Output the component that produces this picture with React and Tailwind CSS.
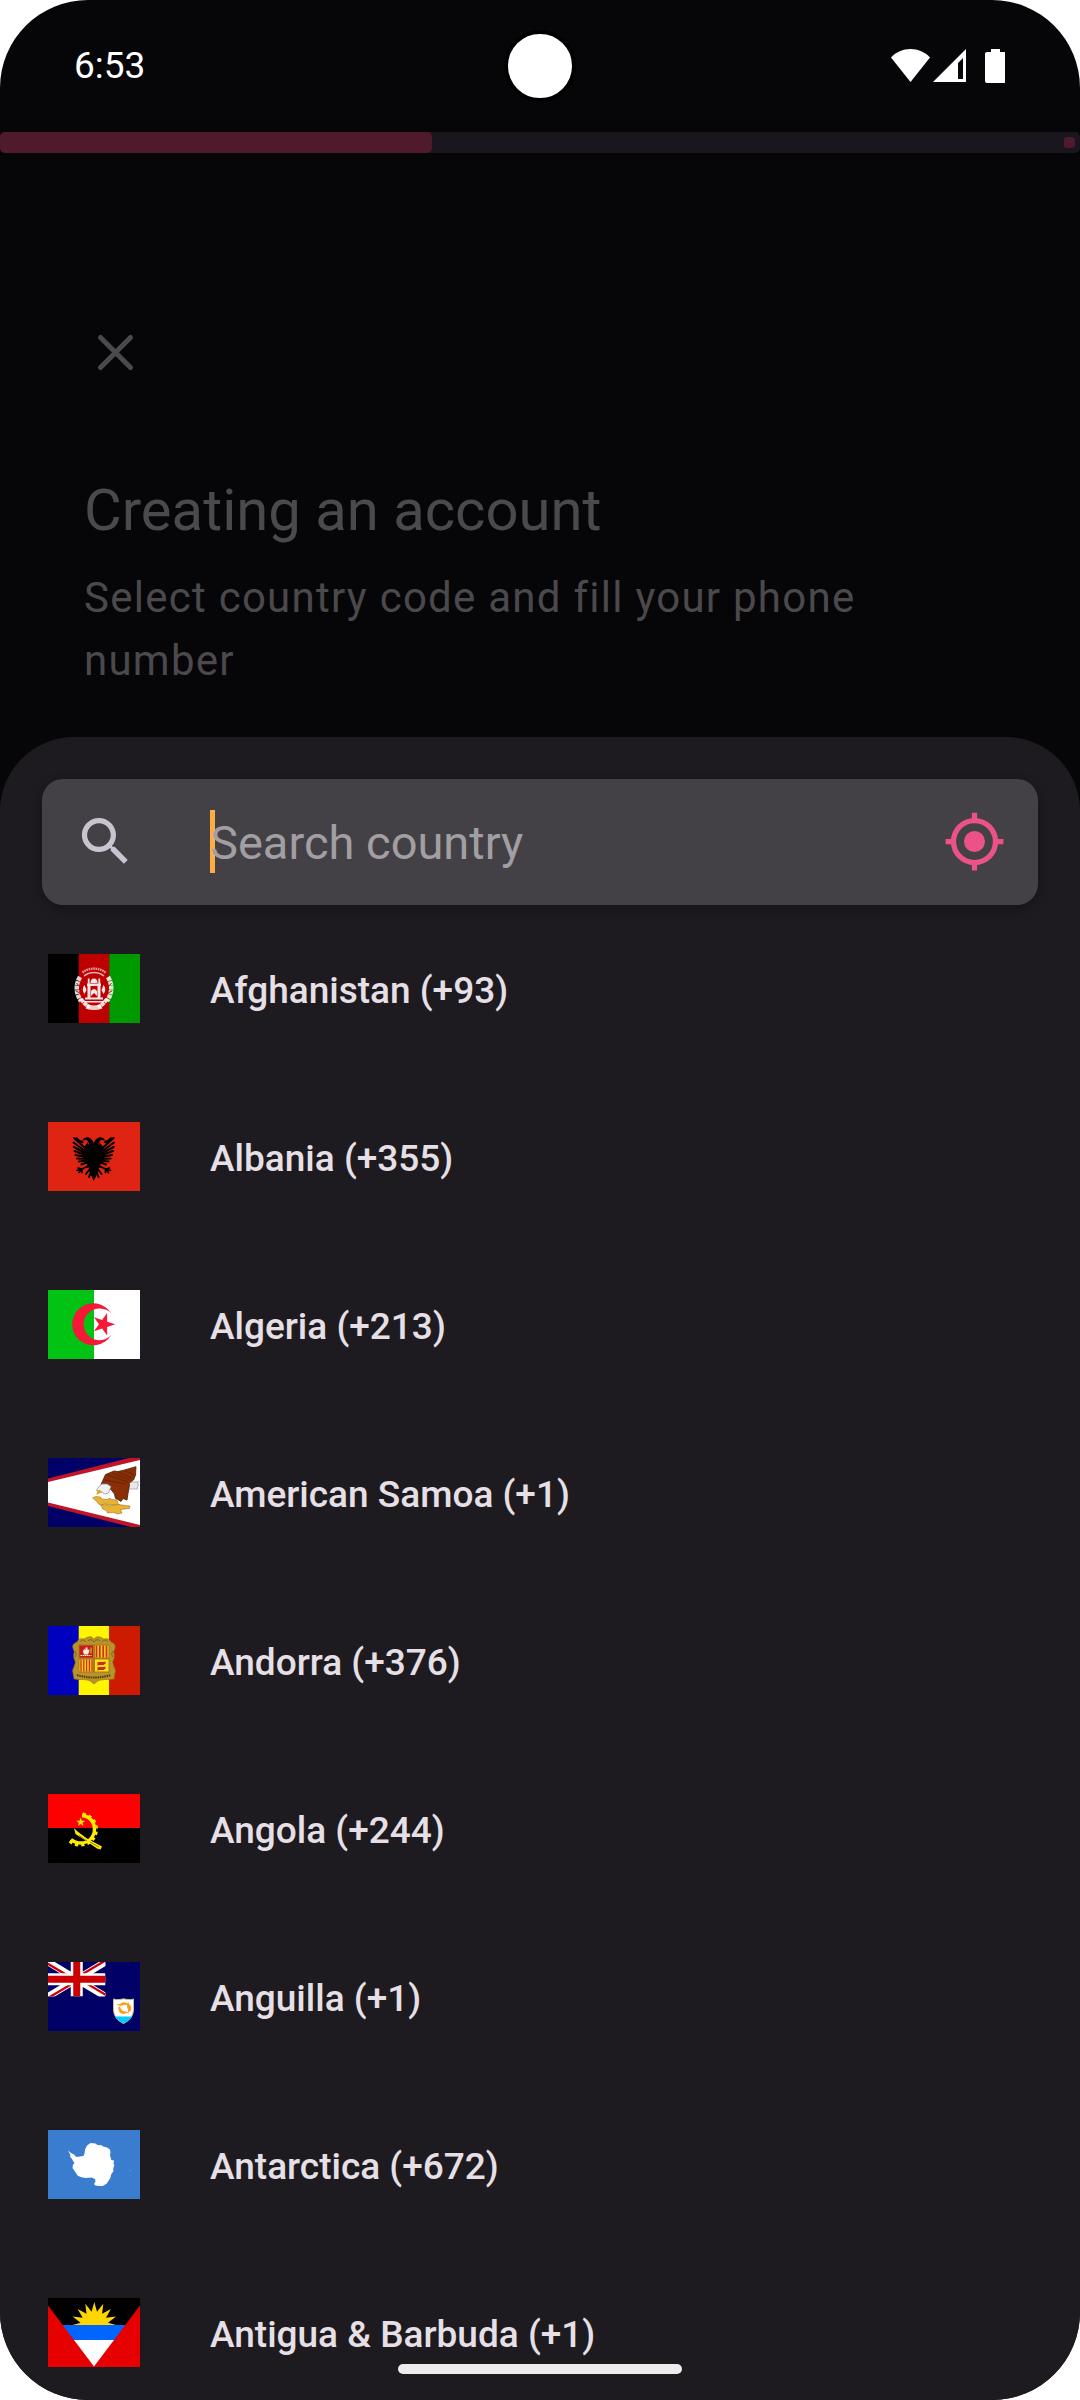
import React from "react";

function starPoints(cx, cy, outer, inner, count, startDeg) {
  const pts = [];
  for (let i = 0; i < count * 2; i++) {
    const r = i % 2 === 0 ? outer : inner;
    const a = ((startDeg + (i * 180) / count) * Math.PI) / 180;
    pts.push(`${(cx + r * Math.cos(a)).toFixed(2)},${(cy + r * Math.sin(a)).toFixed(2)}`);
  }
  return pts.join(" ");
}

function Afghanistan() {
  return (
    <>
      <rect width="31" height="69" fill="#000" />
      <rect x="30.7" width="30.6" height="69" fill="#bf0000" />
      <rect x="61.3" width="30.7" height="69" fill="#009900" />
      <g fill="none" stroke="#fff">
        <path d="M32 23q-7 12 1 24M60 23q7 12-1 24" strokeWidth="4.500" strokeDasharray="4 .6" opacity=".85" />
        <path d="M33 45q4 6 9 8M59 45q-4 6-9 8" strokeWidth="4" strokeDasharray="4 .5" opacity=".85" />
        <path d="M34.500 18.500a19 19 0 0 1 23 0" strokeWidth="2.500" strokeDasharray="1.600 .7" opacity=".6" />
        <path d="M36 22a16 16 0 0 1 20 0" strokeWidth="1.500" opacity=".7" />
        <path d="M38.500 52.500q7.500 2.500 15 0" strokeWidth="4.500" opacity=".8" />
        <path d="M28.500 29l3.500 4M28 37l4 2M63.500 29l-3.500 4M64 37l-4 2" stroke="#bf0000" strokeWidth=".9" />
      </g>
      <g fill="#fff" opacity=".9">
        <path d="M42.500 29a3.500 4.500 0 0 1 7 0z" />
        <path d="M39 29.500h14v2.500H39zM39.500 31h3v13h-3zM49.500 31h3v13h-3zM39.800 24.500h1.800v5.500h-1.800zM50.400 24.500h1.800v5.500h-1.800z" />
        <path d="M43 37q3-4 6 0v5l-3-3-3 3z" />
        <path d="M37 43.500h18v2H37zM36 47h20v1.500H36z" />
        <path d="M36.500 31q-3.500 4 0 9l2-4zM55.500 31q3.500 4 0 9l-2-4z" />
      </g>
    </>
  );
}

function AlbaniaHalf() {
  return (
    <>
      <path d="M46 22C44.500 17 41 14.800 38 15.500c-2 .3-3 1.500-3.500 3l4-.5c2 .5 1.500 3-.5 4.500l-2 3-1 8 2 6 2.500 3.500-1 3 2.500-.5-.5 4 2 .5.5 3.500L46 59z" fill="#000" />
      <g fill="none" stroke="#000" strokeLinecap="round">
        <path
          d="M37 26L26 16M37 29L25.500 20.500M37 31L25.800 25M37 33L26.500 29M38 35L27.500 33M38.500 37L29 36.500M39 38.500L31 39.500M40 40L33.500 42.500"
          strokeWidth="2"
        />
        <path d="M34.500 20q-4-.5-6-3.500" strokeWidth="2.500" />
        <path d="M40 44l-6 3-4-1M34 47l-5 1.500M34 47l-3 3.500M34 47v3.500" strokeWidth="1.700" />
        <path d="M41 48l-3 4M43 50l-2 5" strokeWidth="2" />
      </g>
      <path d="M35 19.500q6-1.500 5.500 3" fill="none" stroke="#e02413" strokeWidth=".8" />
    </>
  );
}

function Albania() {
  return (
    <>
      <rect width="92" height="69" fill="#e02413" />
      <AlbaniaHalf />
      <g transform="matrix(-1 0 0 1 91.500 0)">
        <AlbaniaHalf />
      </g>
    </>
  );
}

function Algeria() {
  return (
    <>
      <rect width="46" height="69" fill="#00c314" />
      <rect x="46" width="46" height="69" fill="#fff" />
      <path d="M63.300 23.600A21 21 0 1 0 63.300 45a15.900 15.900 0 1 1 0-21.400z" fill="#f51837" />
      <polygon points={starPoints(55.5, 34.3, 11.8, 4.5, 5, 0)} fill="#f51837" />
    </>
  );
}

function AmericanSamoa() {
  return (
    <>
      <rect width="92" height="69" fill="#000066" />
      <path d="M0 20.500L81 0h11v69h-9L0 48z" fill="#bf1526" />
      <path d="M0 24L92 2v65L0 44.500z" fill="#fff" />
      <path d="M79 24.500l11.500-.8-1 2.500 1.500 1-1.800 1.300.5 2.500L79 31z" fill="#e8e8ee" stroke="#9a9aa4" strokeWidth=".7" />
      <path d="M88 8.700L87.500 17l-2 5-4.500 3 .5 2-1.500 8.500-1 6.500-4-1.500-2 3-3-2-2.500-1-1-4.500-3.500-4.500L53 26.500l4.500-10L66 13l4 .5 6.500-1.500z" fill="#8a2f05" stroke="#4d1a02" strokeWidth=".8" />
      <path d="M60 17l20 7M64 15l18 7M70 14l14 6M76 12.500l10 4M57 22l20 4" stroke="#5c2104" strokeWidth=".8" fill="none" />
      <path d="M63 28.500l-4-2.500-5 0-4 3.500-1.500 3 3.500.5 4.500 3 4-1z" fill="#eef0f4" stroke="#8c8c96" strokeWidth=".7" />
      <path d="M51.500 32l-2.500 1.500-.5 3.500 3-1.800 3-1z" fill="#e2a419" />
      <g fill="#e9b233" stroke="#8a6414" strokeWidth=".5">
        <path d="M44.500 40l3-1.500 5 .5 1 2 7 .5.5-1.500 3 1.500 5 .5 1 3.500 3 3-4 0-4-2-4 .5-4-1.500-4 2-3-2-1-2z" />
        <path d="M53 47l5-.5 3 1.500 9-1.500 12 1.500-.5 2.500-9 1 1.500 3.500-4 1-4.500-1.500-6 .5-1-2.500-4-1.500z" />
      </g>
    </>
  );
}

function Andorra() {
  return (
    <>
      <rect width="31" height="69" fill="#0000bf" />
      <rect x="30.7" width="30.6" height="69" fill="#fff500" />
      <rect x="61.3" width="30.7" height="69" fill="#cc1b00" />
      <path
        d="M46 14c1-3 3-4 5-3 3 0 3 2 6 2 3-1 5 1 6 3 3 1 5 3 4 6 0 2-2 3-1 5 1 3 0 6-1 8s1 4 1 6c1 2 2 3 1 6l-1 6c-5 1-9 0-13 1-3 0-4 2-7 4-3-2-4-4-7-4-4-1-8 0-13-1l-1-6c-1-3 0-4 1-6 0-2 2-4 1-6s-2-5-1-8c1-2-1-3-1-5-1-3 1-5 4-6 1-2 3-4 6-3 3 0 3-2 6-2 2-1 4 0 5 3z"
        fill="#b8922a"
        stroke="#8d6e1c"
        strokeWidth=".6"
      />
      <path d="M32 16q3-4 6 0M54 16q3-4 6 0M40 15q3-3 6 1 3-4 6-1M27 25q3 3 0 6M65 25q-3 3 0 6" stroke="#7d611a" strokeWidth=".9" fill="none" />
      <rect x="30.5" y="18.500" width="31" height="28" fill="#a67a22" />
      <rect x="31.500" y="19.500" width="13.500" height="12" fill="#cc1b1b" />
      <path d="M36 28.500l-1-3 1-2.500 1.500 1 0-2.500h2l0 2.500 2-.5-.5 2.500-1 2.500z" fill="#fff3cf" />
      <path d="M32.500 29.500h11" stroke="#fff3cf" strokeWidth="1" strokeDasharray="1.500 .5" />
      <path d="M43 21.500v6" stroke="#e6c833" strokeWidth="1" />
      <rect x="47" y="19.500" width="13.500" height="12" fill="#ffd21a" />
      <path d="M48.500 19.500v12M51.800 19.500v12M55.200 19.500v12M58.500 19.500v12" stroke="#c8311b" strokeWidth="1.700" />
      <rect x="31.500" y="33.500" width="13.500" height="12" fill="#ffd21a" />
      <path d="M33 33.500v12M35.800 33.500v12M38.600 33.500v12M41.400 33.500v12M44 33.500v12" stroke="#c8311b" strokeWidth="1.300" />
      <rect x="47" y="33.500" width="13.500" height="12" fill="#ffe11a" />
      <path d="M49.500 36h7l1-1v3h-1l-.5 1h-5l-1.500 1zM49.500 41h7l1-1v3h-1l-.5 1h-5l-1.500 1z" fill="#cf2a1b" />
      <path d="M29 49q17 5 34 0" fill="none" stroke="#4f3c10" strokeWidth="2" strokeDasharray="1.500 .8" />
    </>
  );
}

function Angola() {
  return (
    <>
      <rect width="92" height="34" fill="#f00" />
      <rect y="34" width="92" height="35" fill="#000" />
      <path d="M34 21.500c8 1 12.500 6.500 12.500 13.500 0 9-7 14-13.500 14-4 0-7-1-10-3.500" fill="none" stroke="#ffec00" strokeWidth="3.400" />
      <path d="M34.500 20c9 1.500 14 8 14 15 0 10-8 16-16 16-4 0-8-1-11-4" fill="none" stroke="#ffec00" strokeWidth="3" strokeDasharray="3.200 3" />
      <path d="M26 34l3.500 3.500 9.500 7 15 8-1.500 3-3.500-1-11.500-8-10-6.500z" fill="#ffec00" />
      <path d="M31 41.500l8 5.500M42 48l9 5" stroke="#8a7b00" strokeWidth=".9" />
      <polygon points={starPoints(32.7, 28.2, 4.8, 1.9, 5, -90)} fill="#ffec00" />
    </>
  );
}

function Anguilla() {
  return (
    <>
      <rect width="92" height="69" fill="#000066" />
      <svg x="0" y="0" width="57.500" height="34.500" viewBox="0 0 57.500 34.500">
        <path d="M0 0L57.500 34.500M57.500 0L0 34.500" stroke="#fff" strokeWidth="7" />
        <path d="M-1 1.200L28 18.600M58.500 33.300L29.500 15.900M56.500-1L28 16.100M1 35.500L29.500 18.400" stroke="#cc0000" strokeWidth="2.300" />
        <path d="M28.750 0v34.500M0 17.250h57.500" stroke="#fff" strokeWidth="12" />
        <path d="M28.750 0v34.500M0 17.250h57.500" stroke="#cc0000" strokeWidth="7" />
      </svg>
      <path d="M65.500 37q3 1 5.500.5 2.500 0 4.500-.7 2 .7 4.500.7 3 .5 5.500-.5v10c0 7-4 11.500-10 14.500-6-3-10-7.500-10-14.500z" fill="#fff" stroke="#c9c096" strokeWidth="1" />
      <path d="M67 54.500h17q-2.500 4-8.500 6.700Q69.500 58.500 67 54.500z" fill="#00ccff" />
      <g fill="#ff9c1a">
        <path d="M68.500 42.500l3.500-.5q3-3 7.500-.5l1 2q-4-1.500-6.500 0-2.500 1-5.500-1z" />
        <path d="M80 39.500l1 2.500q3.500 3 1.500 7l-2.500 1.500q.5-3-1-5.500 0-3 1-5.500z" />
        <path d="M82 51.500l-3.500-.5q-4 2-7-.5l-1.500-5 2-1q.5 3 3 4.500 4 0 7 2.500z" />
      </g>
    </>
  );
}

function Antarctica() {
  return (
    <>
      <rect width="92" height="69" fill="#3a7dce" />
      <path
        d="M20 20.500l3 2.500 3 1.500 2.500 2.500 7-1 1-2.500.5-4 2-4 3.500-2.500 5 .5 2 1.500 4 .2 1.500 1.300 3.500.8 3.500 2.200.5 3-.5 2.500 1.300 5 2.700.5-.5 3 .8 2-1 2.500v3.500l-2 2.500-1 4-3.500 5.500-4 2.500H51.500l-4-.5-1.500-1.500 1.500-2.500-.5-2.500-3.500-1.500-6 .5-5-1-3-1.500L27 41.500l-2.500-3.500.5-3.500 1.500-1.500L25 31l-1-2-2-2.500.5-1.500z"
        fill="#fff"
      />
      <circle cx="82.500" cy="40.500" r=".6" fill="#6f9fd8" />
    </>
  );
}

function Antigua() {
  return (
    <>
      <rect width="92" height="69" fill="#e60000" />
      <clipPath id="antigua-v">
        <path d="M0 0h92v7.500L46 68.500 0 7.500z" />
      </clipPath>
      <g clipPath="url(#antigua-v)">
        <rect width="92" height="27" fill="#000" />
        <polygon points={starPoints(46.3, 27.5, 23.5, 14, 16, -90)} fill="#ffd600" />
        <rect y="27" width="92" height="15" fill="#0066ff" />
        <rect y="42" width="92" height="27" fill="#fff" />
      </g>
    </>
  );
}

const countries = [
  { name: "Afghanistan", code: "+93", Flag: Afghanistan },
  { name: "Albania", code: "+355", Flag: Albania },
  { name: "Algeria", code: "+213", Flag: Algeria },
  { name: "American Samoa", code: "+1", Flag: AmericanSamoa },
  { name: "Andorra", code: "+376", Flag: Andorra },
  { name: "Angola", code: "+244", Flag: Angola },
  { name: "Anguilla", code: "+1", Flag: Anguilla },
  { name: "Antarctica", code: "+672", Flag: Antarctica },
  { name: "Antigua & Barbuda", code: "+1", Flag: Antigua },
];

function StatusBar() {
  return (
    <div className="relative flex h-[132px] shrink-0 items-center justify-between pr-[75px] pl-[74px] text-white">
      <span className="text-[37px] leading-[44px]">6:53</span>
      <div className="absolute top-[30px] left-1/2 size-[72px] -translate-x-1/2 rounded-full border-4 border-black bg-white" />
      <svg className="h-[34px] w-[114px]" viewBox="0 0 114 34" fill="currentColor" aria-hidden="true">
        <path d="M0 8.500C5 3 12 0 19.500 0S34 3 39 8.500L19.500 33z" />
        <path fillRule="evenodd" d="M75 0v33H42zM72 9l-5 5v16h5z" />
        <path d="M100 0h9v3h4a2 2 0 0 1 2 2v27a2 2 0 0 1-2 2H96a2 2 0 0 1-2-2V5a2 2 0 0 1 2-2h4z" />
      </svg>
    </div>
  );
}

function Progress() {
  return (
    <div
      role="progressbar"
      aria-label="Account creation"
      aria-valuenow={40}
      className="flex h-[21px] shrink-0 items-center justify-between rounded-[5px] bg-[#19171d]"
    >
      <div className="h-full w-2/5 rounded-[5px] bg-[#4f1a2c]" />
      <div className="mr-[5px] size-[11px] rounded-[3px] bg-[#4f1a2c]" />
    </div>
  );
}

function SearchBar() {
  return (
    <div className="mx-[42px] flex h-[126px] shrink-0 items-center rounded-[21px] bg-[#444146] px-8 pb-[2px] shadow-[0_4px_12px_rgba(0,0,0,0.3)]">
      <label htmlFor="country-search" aria-label="Search country">
        <svg className="size-[63px]" viewBox="0 0 24 24" fill="#cac4d0" aria-hidden="true">
          <path d="M15.500 14h-.79l-.28-.27C15.410 12.590 16 11.110 16 9.500 16 5.910 13.090 3 9.500 3S3 5.910 3 9.500 5.910 16 9.500 16c1.610 0 3.090-.59 4.230-1.570l.27.28v.79l5 4.990L20.490 19l-4.990-5zm-6 0C7.010 14 5 11.990 5 9.500S7.010 5 9.500 5 14 7.010 14 9.500 11.990 14 9.500 14z" />
        </svg>
      </label>
      <div className="relative ml-[73px] min-w-0 flex-1">
        <span className="absolute inset-y-0 left-0 w-[5px] bg-[#ffad42]" />
        <input
          id="country-search"
          type="text"
          placeholder="Search country"
          className="relative block h-[63px] w-full bg-transparent pt-[2px] text-[47px] leading-[63px] text-[#e6e1e5] outline-none placeholder:text-[#a19fa2] placeholder:opacity-100"
        />
      </div>
      <button type="button" aria-label="Use my location" className="shrink-0">
        <svg className="size-[63px]" viewBox="0 0 24 24" fill="none" stroke="#ec5287" strokeWidth="2" aria-hidden="true">
          <circle cx="12" cy="12" r="8" />
          <path d="M12 1v3M12 20v3M1 12h3M20 12h3" />
          <circle cx="12" cy="12" r="4" fill="#ec5287" stroke="none" />
        </svg>
      </button>
    </div>
  );
}

export default function App() {
  return (
    <div className="h-screen bg-white font-[Roboto,sans-serif]">
      <div className="relative flex h-full flex-col overflow-hidden rounded-[88px] bg-[#060608]">
        <StatusBar />
        <Progress />
        <header className="shrink-0 px-[84px] pt-[168px] pb-[45px] text-[#4b494c]">
          <button type="button" aria-label="Close" className="block">
            <svg className="size-[63px]" viewBox="0 0 63 63" fill="none" stroke="currentColor" strokeWidth="5" strokeLinecap="round" aria-hidden="true">
              <path d="M16.500 16.500l30 30M46.500 16.500l-30 30" />
            </svg>
          </button>
          <h1 className="mt-[89px] text-[58px] leading-[74px]">Creating an account</h1>
          <p className="mt-[19px] text-[42px] leading-[63px] tracking-[0.03em]">
            Select country code and fill your phone number
          </p>
        </header>
        <section aria-label="Choose a country" className="flex min-h-0 flex-1 flex-col rounded-t-[74px] bg-[#1e1b20] pt-[42px]">
          <SearchBar />
          <ul className="min-h-0 flex-1 overflow-hidden">
            {countries.map(({ name, code, Flag }) => (
              <li key={name}>
                <button type="button" className="flex h-[168px] w-full items-center gap-[70px] pb-[2px] pl-12 text-left">
                  <svg className="h-[69px] w-[92px] shrink-0" viewBox="0 0 92 69" aria-hidden="true">
                    <Flag />
                  </svg>
                  <span className="pt-[6px] text-[37px] leading-[52px] font-medium text-[#e6e0e6]">
                    {name} ({code})
                  </span>
                </button>
              </li>
            ))}
          </ul>
        </section>
        <div className="absolute bottom-[26px] left-1/2 h-[10px] w-[284px] -translate-x-1/2 rounded-full bg-[#ededed]" />
      </div>
    </div>
  );
}
